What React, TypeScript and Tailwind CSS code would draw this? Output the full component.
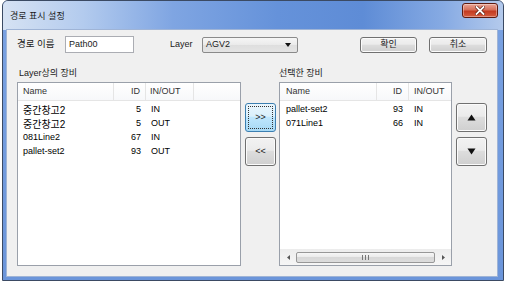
const FONT = { fontFamily: '"Liberation Sans", "Noto Sans CJK KR", sans-serif' };

const BTN =
  "flex items-center justify-center rounded-[3px] border border-[#707070] bg-[linear-gradient(#f2f2f2,#ebebeb_45%,#dddddd_50%,#cfcfcf)] shadow-[inset_0_0_0_1px_#fbfbfb] text-[#1a1a1a]";

const leftRows = [
  { name: "중간창고2", id: 5, io: "IN", kr: true },
  { name: "중간창고2", id: 5, io: "OUT", kr: true },
  { name: "081Line2", id: 67, io: "IN" },
  { name: "pallet-set2", id: 93, io: "OUT" },
];

const rightRows = [
  { name: "pallet-set2", id: 93, io: "IN" },
  { name: "071Line1", id: 66, io: "IN" },
];

function Triangle({ dir }: { dir: "up" | "down" }) {
  return (
    <svg width="9" height="7" viewBox="0 0 9 7">
      {dir === "up" ? (
        <polygon points="4.5,0.5 8.5,6.5 0.5,6.5" fill="#111" />
      ) : (
        <polygon points="0.5,0.5 8.5,0.5 4.5,6.5" fill="#111" />
      )}
    </svg>
  );
}

function ListHeader({ nameW, idPr, right }: { nameW: number; idPr: number; right?: boolean }) {
  return (
    <div className="flex h-[18px] shrink-0 items-center border-b border-[#e5e5e5] bg-[linear-gradient(#ffffff,#f7f8fa)] text-[9px] text-[#333]">
      <div
        className={`flex h-full items-center border-r border-[#e5e5e5] ${right ? "pl-[6px]" : "pl-[5px]"}`}
        style={{ width: nameW }}
      >
        Name
      </div>
      <div
        className="flex h-full w-[32px] items-center justify-end border-r border-[#e5e5e5]"
        style={{ paddingRight: idPr }}
      >
        ID
      </div>
      {right ? (
        <div className="flex h-full flex-1 items-center pl-[5px]">IN/OUT</div>
      ) : (
        <>
          <div className="flex h-full w-[48px] items-center border-r border-[#e5e5e5] pl-[4px]">IN/OUT</div>
          <div className="h-full flex-1" />
        </>
      )}
    </div>
  );
}

export default function App() {
  return (
    <div className="h-[283px] w-[507px] overflow-hidden bg-white" style={FONT}>
      <div className="ml-[2px] flex h-[281px] w-[502px] flex-col rounded-t-[6px] border border-[#3b4a63] bg-[linear-gradient(#7aa2e2,#6b95da)]">
        {/* title bar */}
        <div className="flex h-[29px] shrink-0 items-start rounded-t-[5px] bg-[linear-gradient(90deg,#d6e2f3_0%,#b3cbee_16%,#7fa5e2_34%,#6592da_55%,#5e8cd6_72%,#86aae3_88%,#b4caec_100%)]">
          <div className="mt-[9px] pl-[7px] text-[9px] leading-[12px] text-[#1b1b1b]">경로 표시 설정</div>
          <div className="ml-auto mr-[5px] mt-[2px] flex h-[15px] w-[36px] items-center justify-center rounded-[3px] border border-[#5e1a10] bg-[linear-gradient(#eaa596,#d6705a_45%,#c33a20_55%,#d45d40)] shadow-[inset_0_0_0_1px_rgba(255,255,255,0.35)]">
            <svg width="10" height="9" viewBox="0 0 10 9">
              <path d="M1.5 1 L8.5 8 M8.5 1 L1.5 8" stroke="#5a1a10" strokeWidth="3.2" strokeLinecap="square" />
              <path d="M1.5 1 L8.5 8 M8.5 1 L1.5 8" stroke="#ffffff" strokeWidth="1.8" strokeLinecap="square" />
            </svg>
          </div>
        </div>

        {/* client area */}
        <div className="mx-[4px] h-[246px] w-[490px] shrink-0 bg-[#f0f0f0] shadow-[0_0_0_1px_#9fb4d6]">
          {/* top row */}
          <div className="mt-[6px] flex h-[17px] items-center pl-[10px] text-[9px] text-[#1a1a1a]">
            <div className="w-[48px] text-[9.5px]">경로 이름</div>
            <div className="flex h-[17px] w-[69px] items-center border border-[#abadb3] bg-white pl-[3px]">Path00</div>
            <div className="ml-[36px] w-[32px]">Layer</div>
            <div className="flex h-[16px] w-[96px] items-center justify-between rounded-[2px] border border-[#8a8a8a] bg-[linear-gradient(#f6f6f6,#eaeaea_50%,#dedede_50%,#e4e4e4)] pl-[3px] pr-[6px]">
              <span>AGV2</span>
              <svg width="6" height="4" viewBox="0 0 6 4">
                <polygon points="0,0 6,0 3,4" fill="#111" />
              </svg>
            </div>
            <div className={`${BTN} ml-[62px] h-[16px] w-[57px]`}>확인</div>
            <div className={`${BTN} ml-[12px] h-[16px] w-[58px]`}>취소</div>
          </div>

          {/* main area */}
          <div className="mt-[13px] flex pl-[10px]">
            {/* left list */}
            <div className="w-[224px]">
              <div className="h-[16px] pl-[2px] text-[9px] leading-[14px] text-[#1a1a1a]">Layer상의 장비</div>
              <div className="flex h-[184px] flex-col border border-[#9aa0aa] bg-white">
                <ListHeader nameW={96} idPr={5} />
                <div className="pt-[2px] text-[9px] text-black">
                  {leftRows.map((r, i) => (
                    <div key={i} className="flex h-[14px] items-center">
                      <div className={`w-[96px] pl-[5px] ${r.kr ? "text-[10px]" : ""}`}>{r.name}</div>
                      <div className="w-[32px] pr-[5px] text-right">{r.id}</div>
                      <div className="pl-[5px]">{r.io}</div>
                    </div>
                  ))}
                </div>
              </div>
            </div>

            {/* move buttons */}
            <div className="ml-[4px] flex w-[31px] flex-col gap-[5px] pt-[37px] text-[9px]">
              <div className="relative flex h-[29px] items-center justify-center rounded-[3px] border border-[#3c7fb1] bg-[linear-gradient(#eaf6fd,#d9f0fc_45%,#bee6fd_50%,#a7d9f5)] text-[#1a1a1a]">
                &gt;&gt;
                <div className="absolute inset-[2px] border border-dotted border-[#333]" />
              </div>
              <div className={`${BTN} h-[29px]`}>&lt;&lt;</div>
            </div>

            {/* right list */}
            <div className="ml-[3px] w-[173px]">
              <div className="h-[16px] text-[9px] leading-[14px] text-[#1a1a1a]">선택한 장비</div>
              <div className="flex h-[184px] flex-col border border-[#9aa0aa] bg-white">
                <ListHeader nameW={97} idPr={6} right />
                <div className="flex-1 pt-[2px] text-[9px] text-black">
                  {rightRows.map((r, i) => (
                    <div key={i} className="flex h-[14px] items-center">
                      <div className="w-[97px] pl-[6px]">{r.name}</div>
                      <div className="w-[32px] pr-[6px] text-right">{r.id}</div>
                      <div className="pl-[5px]">{r.io}</div>
                    </div>
                  ))}
                </div>
                {/* horizontal scrollbar */}
                <div className="flex h-[16px] shrink-0 items-center bg-[linear-gradient(#ececec,#f6f6f6)]">
                  <div className="flex w-[16px] justify-center">
                    <svg width="3" height="5" viewBox="0 0 3 5">
                      <polygon points="3,0 3,5 0,2.5" fill="#555" />
                    </svg>
                  </div>
                  <div className="flex h-[11px] flex-1 items-center justify-center rounded-[2px] border border-[#979797] bg-[linear-gradient(#f6f6f6,#e9e9e9_50%,#d8d8d8_50%,#dcdcdc)]">
                    <svg width="7" height="5" viewBox="0 0 7 5">
                      <path d="M0.5 0 V5 M3.5 0 V5 M6.5 0 V5" stroke="#777" strokeWidth="1" />
                    </svg>
                  </div>
                  <div className="flex w-[16px] justify-center">
                    <svg width="3" height="5" viewBox="0 0 3 5">
                      <polygon points="0,0 0,5 3,2.5" fill="#555" />
                    </svg>
                  </div>
                </div>
              </div>
            </div>

            {/* order buttons */}
            <div className="ml-[4px] flex w-[31px] flex-col gap-[5px] pt-[37px]">
              <div className={`${BTN} h-[29px]`}>
                <Triangle dir="up" />
              </div>
              <div className={`${BTN} h-[29px]`}>
                <Triangle dir="down" />
              </div>
            </div>
          </div>
        </div>
      </div>
    </div>
  );
}
